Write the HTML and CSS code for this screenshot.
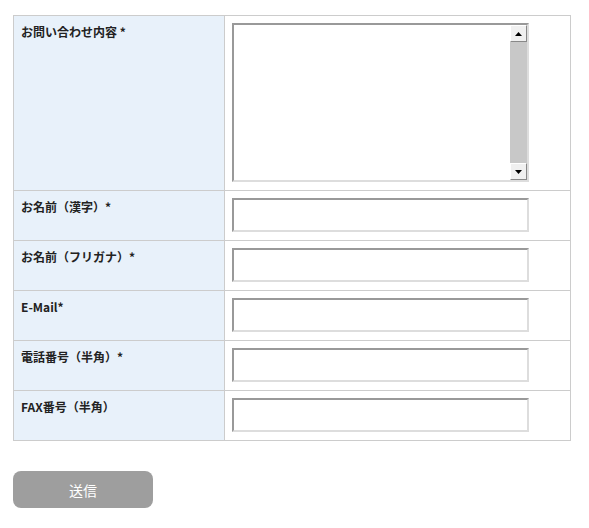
FILE: index.html
```html
<!DOCTYPE html>
<html lang="ja">
<head>
    <meta charset="UTF-8">
    <title>お問い合わせ</title>
    <link rel="stylesheet" href="styles.css">
</head>
<body>
    <form class="contact-form">
        <table class="form-table">
            <tr>
                <th>お問い合わせ内容 *</th>
                <td>
                    <div class="memo-box">
                        <textarea name="body"></textarea>
                        <div class="scrollbar">
                            <span class="scroll-btn">
                                <svg width="7" height="4" viewBox="0 0 7 4"><path d="M3.5 0L7 4H0z" fill="#000"/></svg>
                            </span>
                            <span class="scroll-track"></span>
                            <span class="scroll-btn">
                                <svg width="7" height="4" viewBox="0 0 7 4"><path d="M0 0h7L3.5 4z" fill="#000"/></svg>
                            </span>
                        </div>
                    </div>
                </td>
            </tr>
            <tr>
                <th>お名前（漢字）*</th>
                <td><input type="text" name="name"></td>
            </tr>
            <tr>
                <th>お名前（フリガナ）*</th>
                <td><input type="text" name="kana"></td>
            </tr>
            <tr>
                <th>E-Mail*</th>
                <td><input type="text" name="email"></td>
            </tr>
            <tr>
                <th>電話番号（半角）*</th>
                <td><input type="text" name="tel"></td>
            </tr>
            <tr>
                <th>FAX番号（半角）</th>
                <td><input type="text" name="fax"></td>
            </tr>
        </table>
        <button type="submit" class="submit-btn">送信</button>
    </form>
</body>
</html>
```

FILE: styles.css
```css
* {
    margin: 0;
    padding: 0;
    box-sizing: border-box;
}

body {
    font-family: "Noto Sans CJK JP", "Noto Sans", sans-serif;
    color: #333;
    background: #fff;
    padding: 15px 0 0 13px;
}

.form-table {
    width: 558px;
    border-collapse: collapse;
}

.form-table th,
.form-table td {
    border: 1px solid #ccc;
    padding: 7px 7px 8px;
    vertical-align: top;
    text-align: left;
}

.form-table th {
    width: 211px;
    background: #e8f1fa;
    font-size: 12px;
    font-weight: bold;
    line-height: 17px;
    color: #222;
}

.form-table input {
    display: block;
    width: 297px;
    height: 34px;
    border: 2px solid;
    border-color: #999 #ddd #ddd #999;
    background: #fff;
    outline: none;
}

.memo-box {
    display: flex;
    width: 297px;
    height: 159px;
    border: 2px solid;
    border-color: #999 #ddd #ddd #999;
    background: #fff;
}

.memo-box textarea {
    flex: 1;
    border: none;
    outline: none;
    resize: none;
    overflow: hidden;
}

.scrollbar {
    display: flex;
    flex-direction: column;
    width: 17px;
    background: #c8c8c8;
}

.scroll-btn {
    display: flex;
    align-items: center;
    justify-content: center;
    height: 17px;
    background: #f0f0f0;
    border: 1px solid;
    border-color: #fff #888 #888 #fff;
}

.scroll-track {
    flex: 1;
}

.submit-btn {
    display: block;
    width: 140px;
    height: 37px;
    margin-top: 30px;
    border: none;
    border-radius: 8px;
    background: #9e9e9e;
    color: #fff;
    font-family: "Noto Sans CJK JP", sans-serif;
    font-size: 14px;
    cursor: pointer;
}
```
